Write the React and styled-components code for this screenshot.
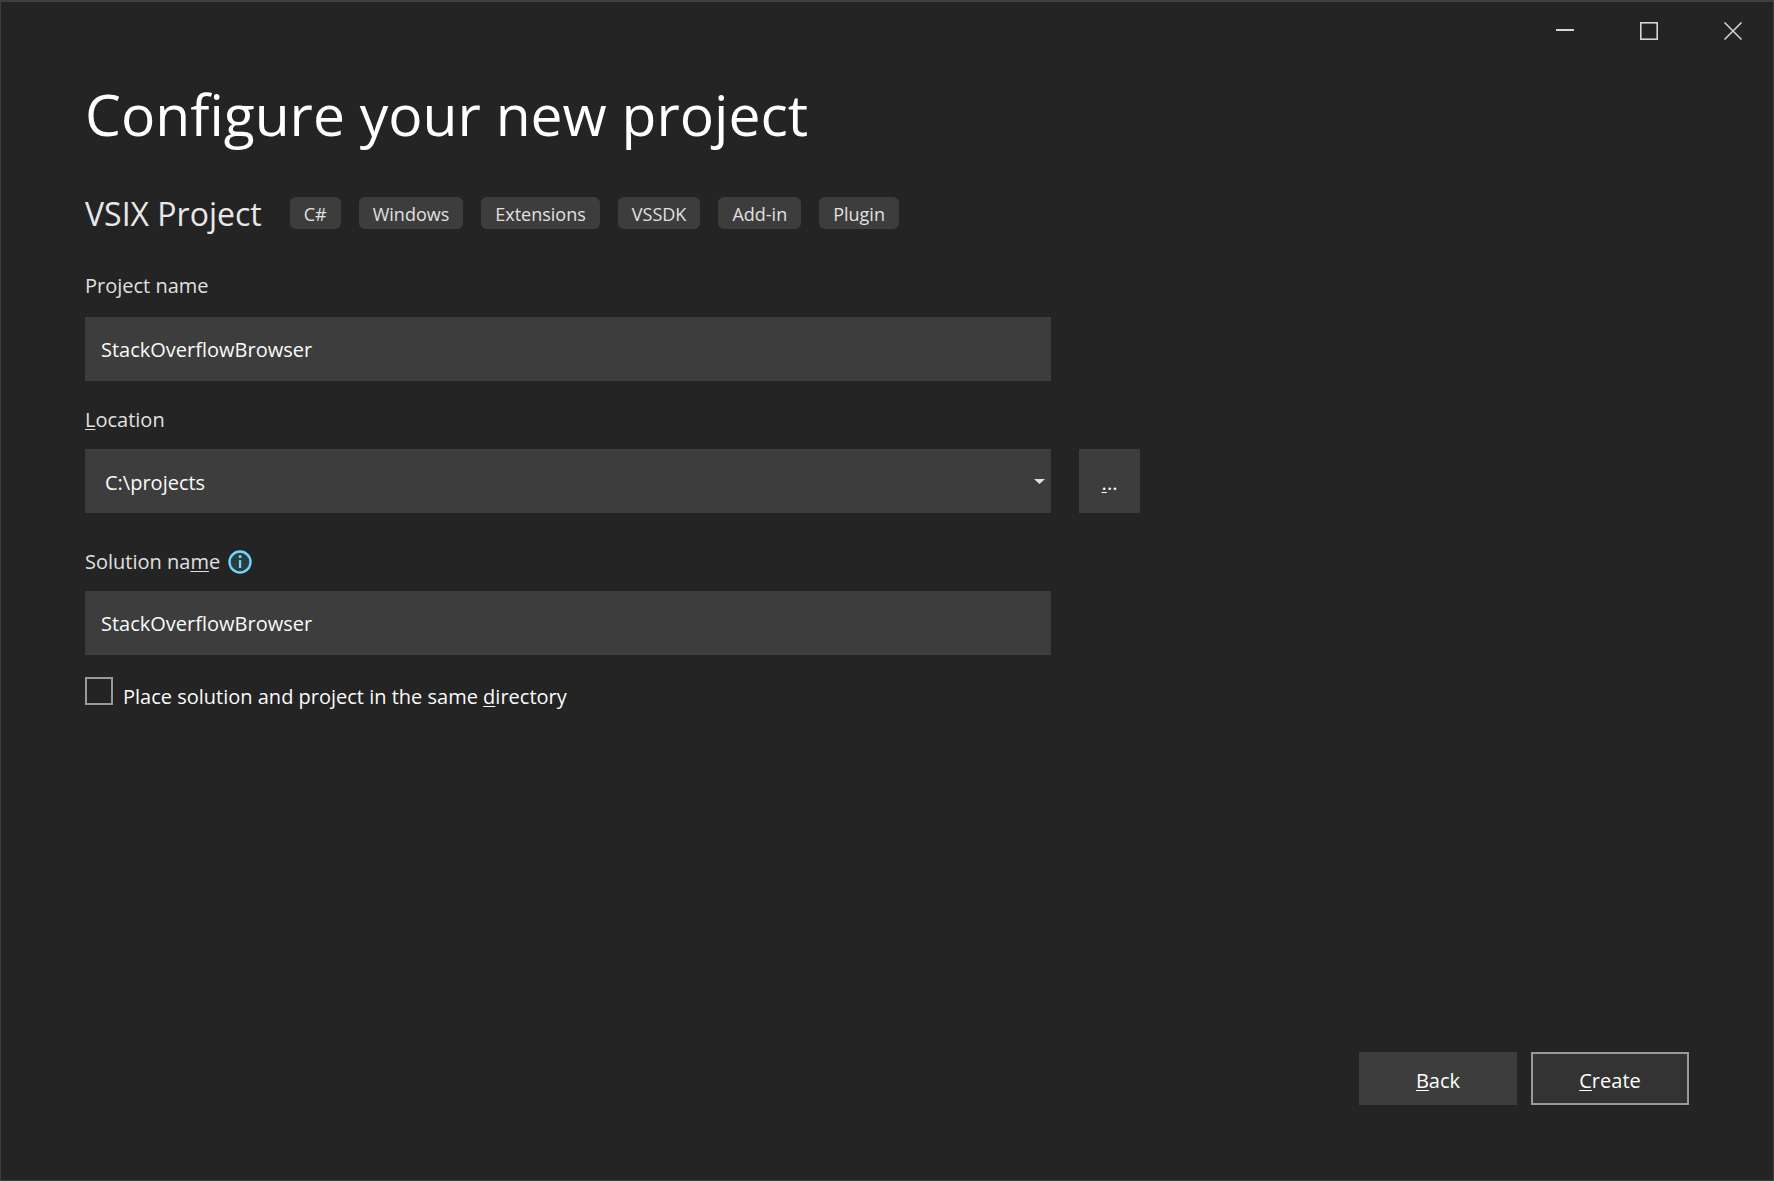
import React from 'react';
import styled, { createGlobalStyle } from 'styled-components';

const GlobalStyle = createGlobalStyle`
    * {
        box-sizing: border-box;
    }

    body {
        margin: 0;
        background: #242424;
    }

    body, button, input, select {
        font-family: "Open Sans", "Noto Sans", sans-serif;
        font-size: 20px;
        line-height: 28px;
    }
`;

const Window = styled.div`
    display: flex;
    flex-direction: column;
    min-height: 100vh;
    background: #242424;
    border: solid 1px #3f3f3f;
    border-top-width: 2px;
    color: #fafafa;
`;

const TitleBar = styled.header`
    display: flex;
    justify-content: flex-end;
    gap: 4px;
`;

const WindowButton = styled.button`
    display: flex;
    align-items: center;
    justify-content: center;
    width: 80px;
    height: 58px;
    padding: 0;
    border: none;
    background: transparent;
    color: #d6d6d6;
`;

const Content = styled.main`
    display: flex;
    flex-direction: column;
    flex: 1;
    padding: 14px 84px 75px;
`;

const Title = styled.h1`
    margin: 0;
    font-size: 57px;
    font-weight: 400;
    line-height: 80px;
    color: #fff;
`;

const TemplateRow = styled.div`
    display: flex;
    align-items: center;
    flex-wrap: wrap;
    gap: 28px;
    margin-top: 36px;
`;

const TemplateName = styled.h2`
    margin: 0;
    padding-top: 2px;
    font-size: 32px;
    font-weight: 400;
    line-height: 44px;
    color: #e8e8e8;
`;

const TagList = styled.ul`
    display: flex;
    flex-wrap: wrap;
    gap: 18px;
    margin: 0;
    padding: 0;
    list-style: none;
`;

const Tag = styled.li`
    height: 32px;
    padding: 0 14px;
    border-radius: 6px;
    background: #3d3d3d;
    color: #e0e0e0;
    font-size: 18px;
    line-height: 34px;
`;

const Form = styled.form`
    display: flex;
    flex-direction: column;
    flex: 1;
    margin-top: 35px;
`;

const Field = styled.div`
    display: flex;
    flex-direction: column;
    gap: ${props => props.$gap || '14px'};
    margin-bottom: ${props => props.$after || '24px'};
`;

const LabelRow = styled.div`
    display: flex;
    align-items: center;
    gap: 8px;
    color: #e0e0e0;
    line-height: 30px;
`;

const AccessKey = styled.span`
    text-decoration: underline;
    text-decoration-thickness: 1px;
    text-decoration-skip-ink: none;
    text-underline-offset: 2px;
`;

const TextInput = styled.input`
    width: 100%;
    max-width: 966px;
    height: 64px;
    padding: 0 16px;
    border: none;
    border-radius: 0;
    background: #3d3d3d;
    color: #fafafa;
`;

const LocationRow = styled.div`
    display: flex;
    gap: 28px;
`;

const SelectWrap = styled.div`
    position: relative;
    width: 100%;
    max-width: 966px;

    svg {
        position: absolute;
        top: 30px;
        right: 6px;
        pointer-events: none;
    }
`;

const Select = styled.select`
    display: block;
    width: 100%;
    height: 64px;
    padding: 4px 20px 0;
    border: none;
    border-radius: 0;
    appearance: none;
    background: #3d3d3d;
    color: #fafafa;
`;

const Button = styled.button`
    width: ${props => props.$width || '158px'};
    height: ${props => props.$height || '53px'};
    padding: 4px 0 0;
    border: solid 2px ${props => (props.$primary ? '#999' : '#3d3d3d')};
    background: ${props => (props.$primary ? '#333' : '#3d3d3d')};
    color: #fff;
`;

const CheckRow = styled.label`
    display: flex;
    align-items: flex-start;
    gap: 10px;
    line-height: 40px;
`;

const Checkbox = styled.input`
    flex: none;
    width: 28px;
    height: 28px;
    margin: 0;
    border: solid 2px #999;
    appearance: none;
    background: #242424;

    &:checked {
        background: #999;
    }
`;

const Footer = styled.footer`
    display: flex;
    justify-content: flex-end;
    gap: 14px;
    margin-top: auto;
`;

const TAGS = ['C#', 'Windows', 'Extensions', 'VSSDK', 'Add-in', 'Plugin'];

const InfoIcon = () => (
    <svg width="24" height="24" viewBox="0 0 24 24" role="img" aria-label="Info">
        <circle cx="12" cy="12" r="10.5" fill="#2c3a41" stroke="#6fd6fb" strokeWidth="2.4" />
        <rect x="10.8" y="5.2" width="2.6" height="2.8" fill="#6fd6fb" />
        <rect x="10.9" y="10" width="2.3" height="8" fill="#6fd6fb" />
    </svg>
);

class ConfigureProject extends React.Component {

    constructor(props) {
        super(props);
        this.state = {
            projectName: 'StackOverflowBrowser',
            location: 'C:\\projects',
            solutionName: 'StackOverflowBrowser',
            sameDirectory: false
        }
    }

    onInputChangeHandler = e => {
        const { id, type, checked, value } = e.target;
        this.setState({
            [id]: type === 'checkbox' ? checked : value
        });
    }

    render() {
        const {
            projectName,
            location,
            solutionName,
            sameDirectory
        } = this.state;
        return (
            <Form onSubmit={e => e.preventDefault()}>
                <Field $gap="16px">
                    <LabelRow>
                        <label htmlFor="projectName">Project name</label>
                    </LabelRow>
                    <TextInput type="text" id="projectName" spellCheck={false}
                        value={projectName} onChange={this.onInputChangeHandler} />
                </Field>

                <Field $after="34px">
                    <LabelRow>
                        <label htmlFor="location"><AccessKey>L</AccessKey>ocation</label>
                    </LabelRow>
                    <LocationRow>
                        <SelectWrap>
                            <Select id="location" value={location} onChange={this.onInputChangeHandler}>
                                <option value="C:\projects">C:\projects</option>
                            </Select>
                            <svg width="11" height="5" viewBox="0 0 11 5">
                                <path d="M0 0H11L5.5 5Z" fill="#e0e0e0" />
                            </svg>
                        </SelectWrap>
                        <Button type="button" $width="61px" $height="64px">
                            <AccessKey>.</AccessKey>..
                        </Button>
                    </LocationRow>
                </Field>

                <Field $after="22px">
                    <LabelRow>
                        <label htmlFor="solutionName">Solution na<AccessKey>m</AccessKey>e</label>
                        <InfoIcon />
                    </LabelRow>
                    <TextInput type="text" id="solutionName" spellCheck={false}
                        value={solutionName} onChange={this.onInputChangeHandler} />
                </Field>

                <CheckRow htmlFor="sameDirectory">
                    <Checkbox type="checkbox" id="sameDirectory"
                        checked={sameDirectory} onChange={this.onInputChangeHandler} />
                    <span>Place solution and project in the same <AccessKey>d</AccessKey>irectory</span>
                </CheckRow>

                <Footer>
                    <Button type="button"><AccessKey>B</AccessKey>ack</Button>
                    <Button type="submit" $primary><AccessKey>C</AccessKey>reate</Button>
                </Footer>
            </Form>
        );
    }
}

const App = () => (
    <>
        <GlobalStyle />
        <Window>
            <TitleBar>
                <WindowButton type="button" aria-label="Minimize">
                    <svg width="18" height="18" viewBox="0 0 18 18">
                        <path d="M0 8H18" stroke="currentColor" strokeWidth="2" />
                    </svg>
                </WindowButton>
                <WindowButton type="button" aria-label="Maximize">
                    <svg width="18" height="18" viewBox="0 0 18 18">
                        <rect x="0.8" y="0.8" width="16.4" height="16.4" fill="none" stroke="currentColor" strokeWidth="1.6" />
                    </svg>
                </WindowButton>
                <WindowButton type="button" aria-label="Close">
                    <svg width="18" height="18" viewBox="0 0 18 18">
                        <path d="M0.5 0.5L17.5 17.5M17.5 0.5L0.5 17.5" stroke="currentColor" strokeWidth="1.5" />
                    </svg>
                </WindowButton>
            </TitleBar>
            <Content>
                <Title>Configure your new project</Title>
                <TemplateRow>
                    <TemplateName>VSIX Project</TemplateName>
                    <TagList>
                        {TAGS.map(tag => <Tag key={tag}>{tag}</Tag>)}
                    </TagList>
                </TemplateRow>
                <ConfigureProject />
            </Content>
        </Window>
    </>
);

export default App;
